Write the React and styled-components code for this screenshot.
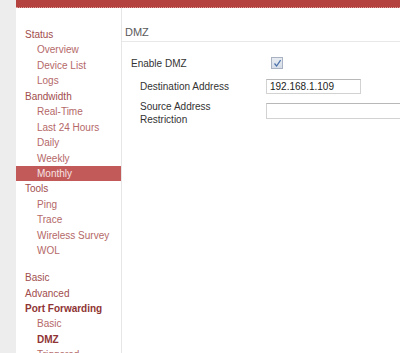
import styled, { createGlobalStyle } from "styled-components";

const GlobalStyle = createGlobalStyle`
  html, body {
    margin: 0;
    padding: 0;
    background: #ffffff;
  }
  body {
    font-family: "Liberation Sans", Arial, sans-serif;
    font-size: 10px;
  }
`;

const menu = [
  { label: "Status", level: 0 },
  { label: "Overview", level: 1 },
  { label: "Device List", level: 1 },
  { label: "Logs", level: 1 },
  { label: "Bandwidth", level: 0 },
  { label: "Real-Time", level: 1 },
  { label: "Last 24 Hours", level: 1 },
  { label: "Daily", level: 1 },
  { label: "Weekly", level: 1 },
  { label: "Monthly", level: 1, active: true },
  { label: "Tools", level: 0 },
  { label: "Ping", level: 1 },
  { label: "Trace", level: 1 },
  { label: "Wireless Survey", level: 1 },
  { label: "WOL", level: 1 },
  { label: "Basic", level: 0, spaced: true },
  { label: "Advanced", level: 0 },
  { label: "Port Forwarding", level: 0, current: true },
  { label: "Basic", level: 1 },
  { label: "DMZ", level: 1, current: true },
  { label: "Triggered", level: 1 },
];

const App = () => {
  return (
    <Page>
      <GlobalStyle />
      <Gutter />
      <Main>
        <TopBar />
        <Body>
          <Sidebar>
            {menu.map((item, i) => (
              <MenuItem
                key={i}
                $level={item.level}
                $active={item.active}
                $current={item.current}
                $spaced={item.spaced}
              >
                {item.label}
              </MenuItem>
            ))}
          </Sidebar>
          <Content>
            <Title>DMZ</Title>
            <Form>
              <Row $height={14}>
                <Label>Enable DMZ</Label>
                <Check>
                  <svg width="9" height="9" viewBox="0 0 9 9">
                    <path
                      d="M1.5 4.5 L3.6 7 L7.6 1.2"
                      fill="none"
                      stroke="#4a70aa"
                      strokeWidth="1.2"
                    />
                  </svg>
                </Check>
              </Row>
              <Row $gap={9} $height={15}>
                <Label $sub>Destination Address</Label>
                <Input $width={95} $height={15} defaultValue="192.168.1.109" />
              </Row>
              <Row $gap={6}>
                <Label $sub>
                  Source Address
                  <br />
                  Restriction
                </Label>
                <Input $width={160} $height={16} $shift={-4} defaultValue="" />
              </Row>
            </Form>
          </Content>
        </Body>
      </Main>
    </Page>
  );
};

export default App;

const Page = styled.div`
  display: flex;
  width: 400px;
  height: 353px;
  overflow: hidden;
`;

const Gutter = styled.div`
  width: 16px;
  flex-shrink: 0;
  background: #ededed;
`;

const Main = styled.div`
  flex: 1;
  display: flex;
  flex-direction: column;
  min-width: 0;
`;

const TopBar = styled.div`
  height: 7px;
  background: #b4423f;
  border-bottom: 1px dotted #d99a98;
  flex-shrink: 0;
`;

const Body = styled.div`
  flex: 1;
  display: flex;
  min-height: 0;
`;

const Sidebar = styled.div`
  width: 105px;
  flex-shrink: 0;
  border-right: 1px solid #e6e6e6;
  padding-top: 19px;
`;

const MenuItem = styled.div`
  line-height: 15.45px;
  height: 15.45px;
  white-space: nowrap;
  padding-left: ${(p) => (p.$level ? 21 : 9)}px;
  margin-top: ${(p) => (p.$spaced ? 11.5 : 0)}px;
  font-weight: ${(p) => (p.$current ? "bold" : "normal")};
  color: ${(p) =>
    p.$active
      ? "#f6e2e2"
      : p.$current
      ? "#8f3434"
      : p.$level
      ? "#b46868"
      : "#a14d4d"};
  background: ${(p) => (p.$active ? "#c35a5a" : "transparent")};
`;

const Content = styled.div`
  flex: 1;
  min-width: 0;
`;

const Title = styled.div`
  font-size: 11px;
  line-height: 13px;
  color: #5a5a5a;
  padding: 18px 0 2px 3px;
  border-bottom: 1px solid #e8e8e8;
`;

const Form = styled.div`
  display: flex;
  flex-direction: column;
  padding: 14px 0 0 9px;
`;

const Row = styled.div`
  display: flex;
  align-items: center;
  margin-top: ${(p) => p.$gap || 0}px;
  min-height: ${(p) => p.$height || 0}px;
`;

const Label = styled.div`
  width: ${(p) => (p.$sub ? 126 : 135)}px;
  padding-left: ${(p) => (p.$sub ? 9 : 0)}px;
  flex-shrink: 0;
  line-height: 13px;
  color: #333333;
`;

const Check = styled.span`
  display: inline-flex;
  align-items: center;
  justify-content: center;
  width: 10px;
  height: 10px;
  margin-left: 5px;
  border: 1px solid #a8b2c2;
  background: linear-gradient(#e8ecf2, #d6dde8);
`;

const Input = styled.input`
  box-sizing: border-box;
  width: ${(p) => p.$width}px;
  height: ${(p) => p.$height}px;
  margin: ${(p) => p.$shift || 0}px 0 0 0;
  padding: 0 3px;
  border: 1px solid #d2d2d2;
  border-top-color: #b8b8b8;
  font-family: "Liberation Sans", Arial, sans-serif;
  font-size: 10px;
  color: #222222;
  background: #ffffff;
  outline: none;
`;
